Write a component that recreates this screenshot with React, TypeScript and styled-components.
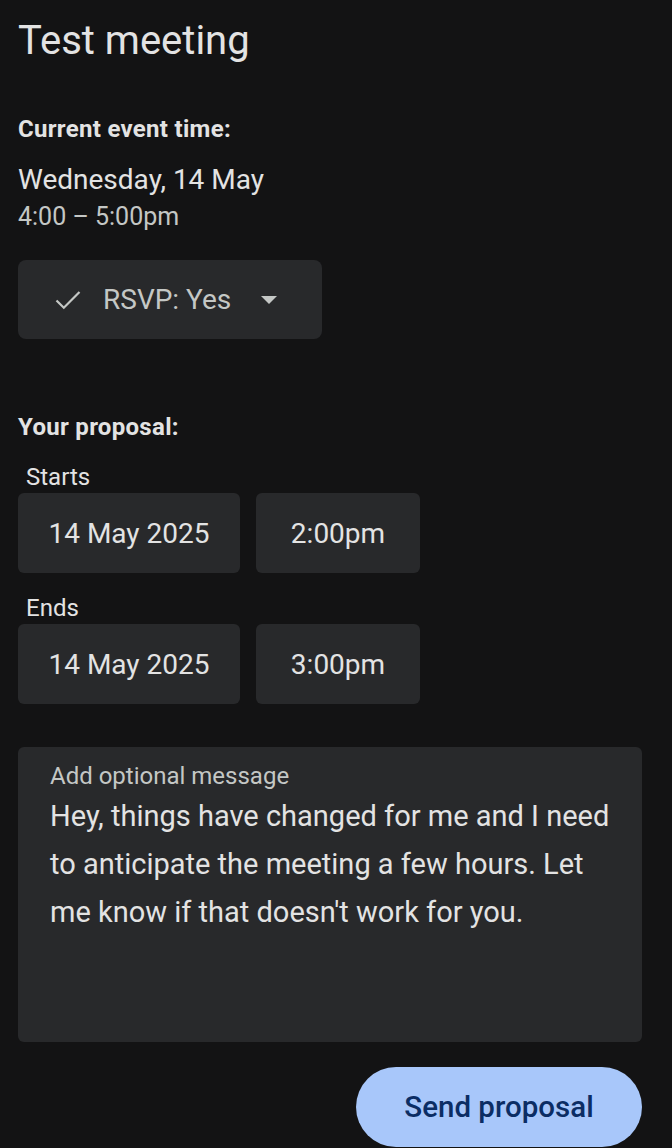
import React from "react";
import styled, { createGlobalStyle } from "styled-components";

const Global = createGlobalStyle`
  html, body { margin: 0; padding: 0; background: #131314; }
  body { font-family: Roboto, "Noto Sans", sans-serif; color: #e3e3e3; }
  * { box-sizing: border-box; }
`;

const Page = styled.div`
  width: 672px;
  height: 1148px;
  overflow: hidden;
  background: #131314;
  padding: 17px 30px 0 18px;
  display: flex;
  flex-direction: column;
  align-items: flex-start;
`;

const Title = styled.h1`
  margin: 0;
  font-size: 40px;
  font-weight: 400;
  line-height: 48px;
  color: #e3e3e3;
`;

const SectionLabel = styled.div<{ $top: number }>`
  margin-top: ${(p) => p.$top}px;
  font-size: 24px;
  font-weight: 700;
  letter-spacing: 0.3px;
  line-height: 28px;
  color: #e3e3e3;
`;

const DateLine = styled.div`
  margin-top: 20px;
  font-size: 28px;
  line-height: 34px;
  color: #e3e3e3;
`;

const TimeLine = styled.div`
  margin-top: 5px;
  font-size: 25px;
  line-height: 30px;
  color: #c4c7c5;
`;

const RsvpButton = styled.button`
  margin-top: 28px;
  width: 304px;
  height: 79px;
  border: none;
  border-radius: 8px;
  background: #28292b;
  color: #c4c7c5;
  display: flex;
  align-items: center;
  padding: 0 0 0 37px;
  font-family: inherit;
  font-size: 28px;
`;

const RsvpText = styled.span`
  margin: 0 30px 0 22px;
  line-height: 34px;
`;

const FieldLabel = styled.div<{ $top: number }>`
  margin-top: ${(p) => p.$top}px;
  padding-left: 8px;
  font-size: 24px;
  line-height: 28px;
  color: #e3e3e3;
`;

const FieldRow = styled.div`
  display: flex;
  gap: 16px;
  margin-top: 2px;
`;

const Field = styled.div<{ $w: number }>`
  width: ${(p) => p.$w}px;
  height: 80px;
  border-radius: 6px;
  background: #28292b;
  display: flex;
  align-items: center;
  justify-content: center;
  font-size: 28px;
  color: #e3e3e3;
`;

const MessageBox = styled.div`
  align-self: stretch;
  margin-top: 43px;
  height: 295px;
  border-radius: 6px;
  background: #28292b;
  padding: 15px 28px 0 32px;
`;

const MessageLabel = styled.div`
  font-size: 24px;
  line-height: 28px;
  color: #c4c7c5;
`;

const MessageText = styled.div`
  margin-top: 2px;
  font-size: 29px;
  line-height: 48px;
  color: #e3e3e3;
`;

const Footer = styled.div`
  align-self: stretch;
  display: flex;
  justify-content: flex-end;
  margin-top: 25px;
`;

const SendButton = styled.button`
  width: 286px;
  height: 80px;
  border: none;
  border-radius: 40px;
  background: #a8c7fa;
  color: #0b2d64;
  font-family: inherit;
  font-size: 29.5px;
  font-weight: 500;
`;

export default function App() {
  return (
    <>
      <Global />
      <Page>
        <Title>Test meeting</Title>
        <SectionLabel $top={50}>Current event time:</SectionLabel>
        <DateLine>Wednesday, 14 May</DateLine>
        <TimeLine>4:00 – 5:00pm</TimeLine>
        <RsvpButton>
          <svg width="26" height="20" viewBox="0 0 26 20" fill="none">
            <path d="M1.5 10.5L8.8 17.8L24.5 2" stroke="#c4c7c5" strokeWidth="2.2" />
          </svg>
          <RsvpText>RSVP: Yes</RsvpText>
          <svg width="16" height="8" viewBox="0 0 16 8">
            <path d="M0 0h16L8 8z" fill="#c4c7c5" />
          </svg>
        </RsvpButton>
        <SectionLabel $top={74}>Your proposal:</SectionLabel>
        <FieldLabel $top={22}>Starts</FieldLabel>
        <FieldRow>
          <Field $w={222}>14 May 2025</Field>
          <Field $w={164}>2:00pm</Field>
        </FieldRow>
        <FieldLabel $top={21}>Ends</FieldLabel>
        <FieldRow>
          <Field $w={222}>14 May 2025</Field>
          <Field $w={164}>3:00pm</Field>
        </FieldRow>
        <MessageBox>
          <MessageLabel>Add optional message</MessageLabel>
          <MessageText>
            Hey, things have changed for me and I need to anticipate the meeting a few hours. Let
            me know if that doesn't work for you.
          </MessageText>
        </MessageBox>
        <Footer>
          <SendButton>Send proposal</SendButton>
        </Footer>
      </Page>
    </>
  );
}
